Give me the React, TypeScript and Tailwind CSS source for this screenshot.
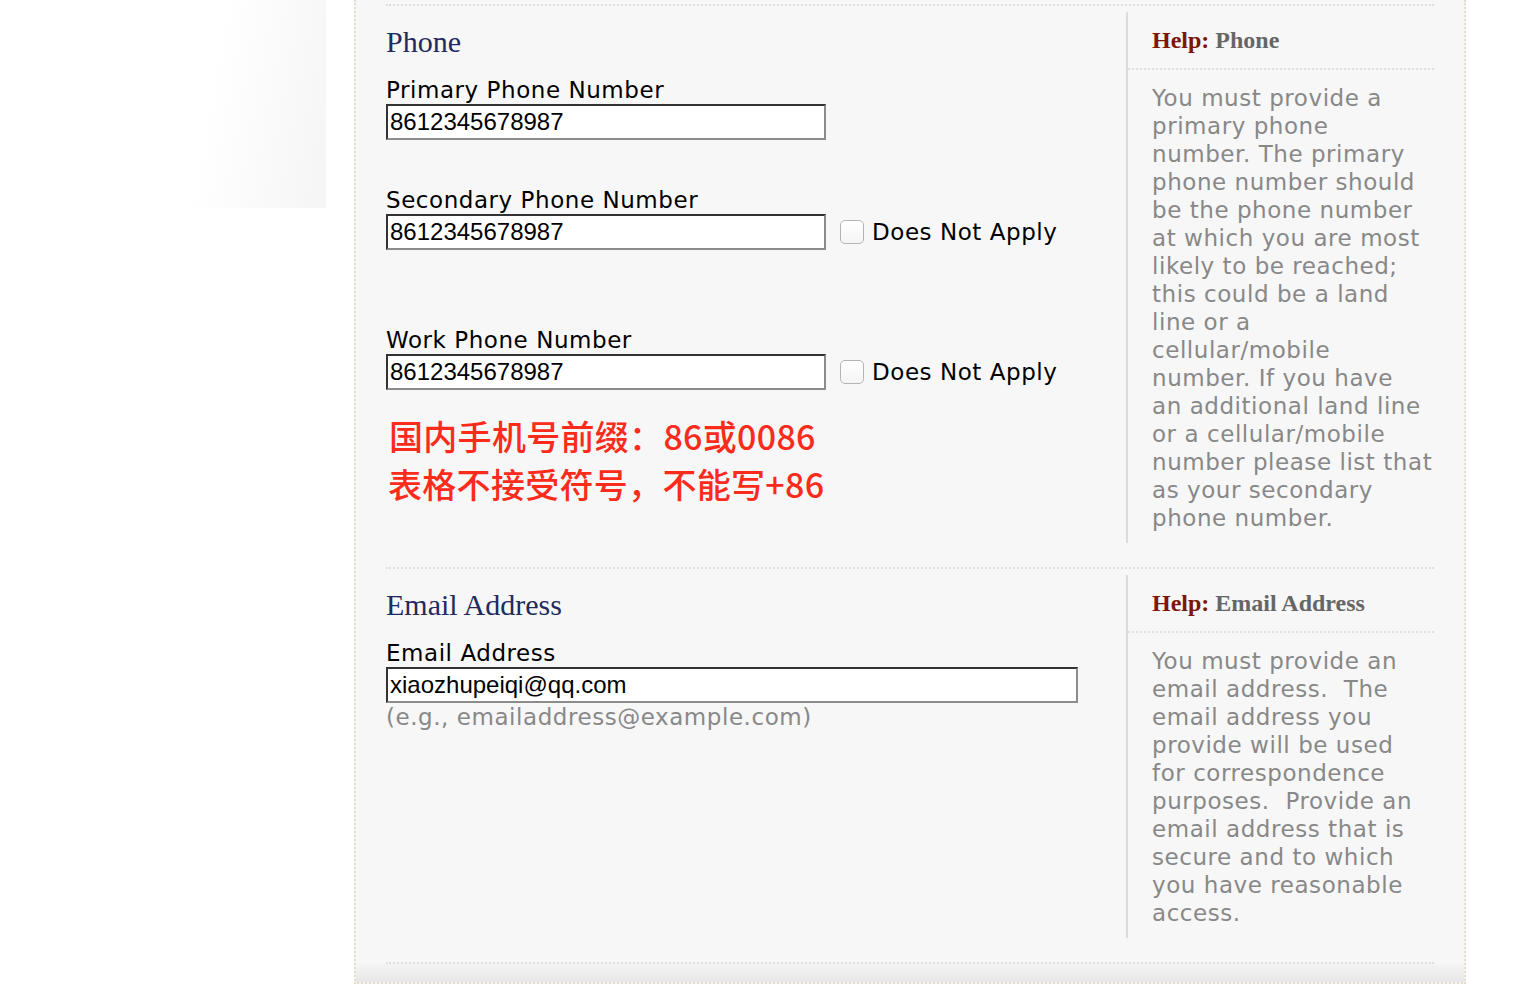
const LABEL = "font-['DejaVu_Sans',Verdana,sans-serif] text-[23px] leading-[28px] tracking-[0.55px]";
const SERIF = "font-['Liberation_Serif','Times_New_Roman',serif]";

const PHONE_HELP = [
  "You must provide a",
  "primary phone",
  "number. The primary",
  "phone number should",
  "be the phone number",
  "at which you are most",
  "likely to be reached;",
  "this could be a land",
  "line or a",
  "cellular/mobile",
  "number. If you have",
  "an additional land line",
  "or a cellular/mobile",
  "number please list that",
  "as your secondary",
  "phone number.",
];

const EMAIL_HELP = [
  "You must provide an",
  "email address.  The",
  "email address you",
  "provide will be used",
  "for correspondence",
  "purposes.  Provide an",
  "email address that is",
  "secure and to which",
  "you have reasonable",
  "access.",
];

function TextInput({ value, width }: { value: string; width: string }) {
  return (
    <input
      readOnly
      value={value}
      className={`${width} h-[36px] bg-white border-2 border-t-[#333] border-l-[#333] border-b-[#8c8c8c] border-r-[#8c8c8c] px-[2px] text-[24px] text-black font-['Liberation_Sans',Arial,sans-serif] outline-none`}
    />
  );
}

function DoesNotApply() {
  return (
    <label className="flex items-center ml-[14px]">
      <span className="w-[24px] h-[24px] rounded-[5px] border border-[#b4b4b4] bg-gradient-to-b from-white to-[#f4f4f4]" />
      <span className={`${LABEL} ml-[8px] text-black`}>Does Not Apply</span>
    </label>
  );
}

function Help({ title, lines }: { title: string; lines: string[] }) {
  return (
    <div className="mt-[6px] border-l-2 border-[#dcdcdc]">
      <div className="pt-[14px] pb-[14px] pl-[24px] border-b-2 border-dotted border-[#dedede]">
        <h3 className={`${SERIF} text-[24px] leading-[28px] font-bold`}>
          <span className="text-[#7d1607]">Help: </span>
          <span className="text-[#666]">{title}</span>
        </h3>
      </div>
      <div className={`${LABEL} pt-[14px] pb-[11px] pl-[24px] text-[#888]`}>
        {lines.map((l) => (
          <div key={l} className="whitespace-pre">
            {l}
          </div>
        ))}
      </div>
    </div>
  );
}

function SectionTitle({ children }: { children: string }) {
  return (
    <h2 className={`${SERIF} text-[30px] leading-[36px] text-[#1f2b5e] mt-[18px]`}>{children}</h2>
  );
}

export default function App() {
  return (
    <div className="flex min-h-[994px] bg-white">
      <div className="w-[354px] shrink-0">
        <div className="w-[326px] h-[208px] bg-[linear-gradient(100deg,#ffffff_62%,#f5f5f5_100%)]" />
      </div>

      <div className="w-[1112px] h-[984px] shrink-0 flex flex-col border-x-2 border-b-2 border-dotted border-[#e4dccb] bg-[#f7f7f7] pt-[4px]">
        {/* Phone */}
        <div className="mx-[30px] border-t-2 border-dotted border-[#dedede] grid grid-cols-[740px_308px] pb-[24px]">
          <div>
            <SectionTitle>Phone</SectionTitle>
            <div className={`${LABEL} mt-[16px] text-black`}>Primary Phone Number</div>
            <TextInput value="8612345678987" width="w-[440px]" />

            <div className={`${LABEL} mt-[46px] text-black`}>Secondary Phone Number</div>
            <div className="flex items-center">
              <TextInput value="8612345678987" width="w-[440px]" />
              <DoesNotApply />
            </div>

            <div className={`${LABEL} mt-[76px] text-black`}>Work Phone Number</div>
            <div className="flex items-center">
              <TextInput value="8612345678987" width="w-[440px]" />
              <DoesNotApply />
            </div>

            <div className="mt-[22px] pl-[3px] font-['Noto_Sans_CJK_SC',sans-serif] text-[34px] leading-[48px] font-medium text-[#fc2b1b] tracking-[0.3px]">
              <div>国内手机号前缀：86或0086</div>
              <div className="-ml-[1px]">表格不接受符号，不能写+86</div>
            </div>
          </div>
          <Help title="Phone" lines={PHONE_HELP} />
        </div>

        {/* Email */}
        <div className="mx-[30px] border-t-2 border-dotted border-[#dedede] grid grid-cols-[740px_308px] pb-[24px]">
          <div>
            <SectionTitle>Email Address</SectionTitle>
            <div className={`${LABEL} mt-[16px] text-black`}>Email Address</div>
            <TextInput value="xiaozhupeiqi@qq.com" width="w-[692px]" />
            <div className={`${LABEL} text-[#888]`}>(e.g., emailaddress@example.com)</div>
          </div>
          <Help title="Email Address" lines={EMAIL_HELP} />
        </div>

        <div className="mx-[30px] border-t-2 border-dotted border-[#dedede]" />
        <div className="flex-1 bg-[linear-gradient(to_bottom,#f4f4f4,#e7e7e7)]" />
      </div>
    </div>
  );
}
